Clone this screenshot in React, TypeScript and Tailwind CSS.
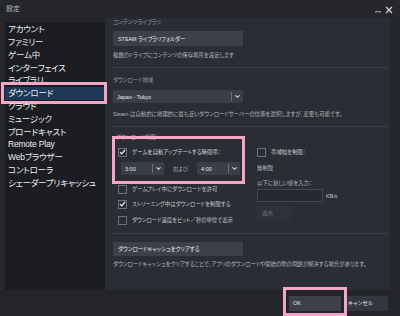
import { ChevronDown } from "lucide-react";

const JP = "font-['Liberation_Sans','Noto_Sans_CJK_JP',sans-serif] [font-feature-settings:'palt']";

const MENU = [
  "アカウント",
  "ファミリー",
  "ゲーム中",
  "インターフェイス",
  "ライブラリ",
  "ダウンロード",
  "クラウド",
  "ミュージック",
  "ブロードキャスト",
  "Remote Play",
  "Webブラウザー",
  "コントローラ",
  "シェーダープリキャッシュ",
];

function Check({ checked }: { checked?: boolean }) {
  return (
    <span className="flex h-[9px] w-[9px] shrink-0 items-center justify-center border border-[#6c7079] bg-[#2a2d34]">
      {checked && (
        <svg viewBox="0 0 10 10" className="h-[8px] w-[8px]">
          <path d="M1.5 5.2 L4 7.6 L8.6 2" fill="none" stroke="#f2f3f4" strokeWidth="1.8" />
        </svg>
      )}
    </span>
  );
}

function Select({ value, className }: { value: string; className?: string }) {
  return (
    <div className={`flex h-[13px] items-center bg-[#3a3e47] text-[5.5px] text-[#e6e8ea] ${className ?? ""}`}>
      <span className="flex-1 pl-[4px]">{value}</span>
      <span className="h-[9px] w-px bg-[#6a6e76]" />
      <ChevronDown className="mx-[2px] h-[7px] w-[7px] text-[#c9ccd0]" strokeWidth={4} />
    </div>
  );
}

function Row({ checked, label }: { checked?: boolean; label: string }) {
  return (
    <div className="flex h-[10px] items-center gap-[5px] pl-[5px] text-[#c4c7cb]">
      <Check checked={checked} />
      <span>{label}</span>
    </div>
  );
}

export default function App() {
  return (
    <div className={`flex h-[316px] w-[400px] flex-col overflow-hidden bg-[#25272d] ${JP}`}>
      {/* title bar */}
      <div className="flex h-[18px] items-start justify-between px-[6px] pt-[5px]">
        <span className="text-[7px] leading-[8px] text-[#b4b7bc]">設定</span>
        <div className="flex items-center gap-[4px] pr-[1px]">
          <svg viewBox="0 0 6 6" className="mt-[3px] h-[6px] w-[6px]">
            <rect x="0" y="3" width="6" height="1.4" fill="#8d9096" />
          </svg>
          <svg viewBox="0 0 8 8" className="h-[8px] w-[8px]">
            <path d="M1 1 L7 7 M7 1 L1 7" stroke="#d2d4d7" strokeWidth="1.3" />
          </svg>
        </div>
      </div>

      <div className="flex h-[272px] pl-[5px] pr-[10px]">
        {/* sidebar */}
        <nav className="mt-[4px] flex h-[268px] w-[100px] shrink-0 flex-col bg-[#1b1d21] pt-[1px]">
          {MENU.map((item) => {
            const active = item === "ダウンロード";
            return (
              <div
                key={item}
                className={`relative flex h-[12.8px] shrink-0 items-center whitespace-nowrap pl-[3px] text-[8.5px] leading-none tracking-[-0.2px] text-[#eceef0] ${
                  active ? "bg-[#1e3858]" : ""
                }`}
              >
                {item}
                {active && (
                  <span className="absolute -bottom-[4px] -left-[4px] -right-[2px] -top-[5px] border-[3px] border-[#f4a6c7]" />
                )}
              </div>
            );
          })}
        </nav>

        {/* content */}
        <main className="flex min-w-0 flex-1 flex-col bg-[#2a2d34] pl-[8px] pr-[3px] text-[5.4px] leading-[8px]">
          <div className="h-[8px] text-[#949aa1]">コンテンツライブラリ</div>
          <button className="mt-[5px] flex h-[15px] w-[130px] items-center bg-[#3b404a] pl-[5px] text-left text-[#e6e8ea]">
            STEAM ライブラリフォルダー
          </button>
          <div className="mt-[5px] h-[8px] text-[#b3b7bb]">複数のドライブにコンテンツの保存場所を設定します</div>
          <div className="mt-[8px] h-px bg-[#3b3e46]" />

          <div className="mt-[8px] h-[8px] text-[#949aa1]">ダウンロード地域</div>
          <Select value="Japan - Tokyo" className="mt-[6px] w-[130px]" />
          <div className="mt-[7px] h-[8px] whitespace-nowrap text-[#b3b7bb]">
            Steam は自動的に地理的に最も近いダウンロードサーバーの位置を選択しますが、変更も可能です。
          </div>
          <div className="mt-[8px] h-px bg-[#3b3e46]" />

          <div className="flex">
            <div className="flex w-[132px] shrink-0 flex-col">
              <div className="mt-[6px] h-[8px] pl-[3px] text-[#949aa1]">ダウンロード制限</div>
              <div className="relative z-10 -ml-[1px] -mt-[5px] border-[3px] border-[#f4a6c7] pb-[6px] pt-[8px]">
                <div className="flex h-[10px] items-center gap-[5px] pl-[3px] text-[#d5d8db]">
                  <Check checked />
                  <span>ゲームを自動アップデートする時間帯：</span>
                </div>
                <div className="mt-[5px] flex items-center pl-[6px]">
                  <Select value="3:00" className="w-[43px]" />
                  <span className="mx-[9px] text-[#b3b7bb]">および</span>
                  <Select value="4:00" className="w-[43px]" />
                </div>
              </div>
              <Row label="ゲームプレイ中にダウンロードを許可" />
              <div className="mt-[5px]">
                <Row checked label="ストリーミング中はダウンロードを制限する" />
              </div>
              <div className="mt-[6px]">
                <Row label="ダウンロード速度をビット／秒の単位で表示" />
              </div>
            </div>

            <div className="ml-[12px] flex flex-col">
              <div className="mt-[20px] flex h-[10px] items-center gap-[5px] text-[#c4c7cb]">
                <Check />
                <span>帯域幅を制限：</span>
              </div>
              <div className="mt-[7px] h-[8px] text-[#b3b7bb]">無制限</div>
              <div className="mt-[7px] h-[8px] text-[#b3b7bb]">以下に新しい値を入力：</div>
              <div className="mt-[2px] flex items-center gap-[3px]">
                <div className="h-[13px] w-[66px] border border-[#43474f] bg-[#25282e]" />
                <span className="text-[#c4c7cb]">KB/s</span>
              </div>
              <button className="mt-[4px] flex h-[14px] w-[34px] items-center bg-[#2e3138] pl-[5px] text-left text-[#6f747b]">
                適用
              </button>
            </div>
          </div>

          <div className="mt-[8px] h-px bg-[#3b3e46]" />
          <button className="mt-[8px] flex h-[14px] w-[130px] items-center bg-[#3b404a] pl-[5px] text-left text-[#e6e8ea]">
            ダウンロードキャッシュをクリアする
          </button>
          <div className="mt-[4px] h-[8px] whitespace-nowrap text-[#b3b7bb]">
            ダウンロードキャッシュをクリアすることで、アプリのダウンロードや開始の際の問題が解決する場合があります。
          </div>
        </main>
      </div>

      {/* footer */}
      <footer className="flex h-[26px] items-start justify-end gap-[5px] bg-[#23252a] pr-[12px] pt-[6px] text-[5.5px]">
        <div className="relative">
          <button className="flex h-[15px] w-[52px] items-center bg-[#3b404a] pl-[4px] text-left text-[#e6e8ea]">OK</button>
          <span className="absolute -bottom-[5px] -left-[6px] -right-[6px] -top-[9px] border-[3px] border-[#f4a6c7]" />
        </div>
        <button className="flex h-[15px] w-[42px] items-center bg-[#32363e] pl-[2px] text-left text-[#e6e8ea]">キャンセル</button>
      </footer>
    </div>
  );
}
